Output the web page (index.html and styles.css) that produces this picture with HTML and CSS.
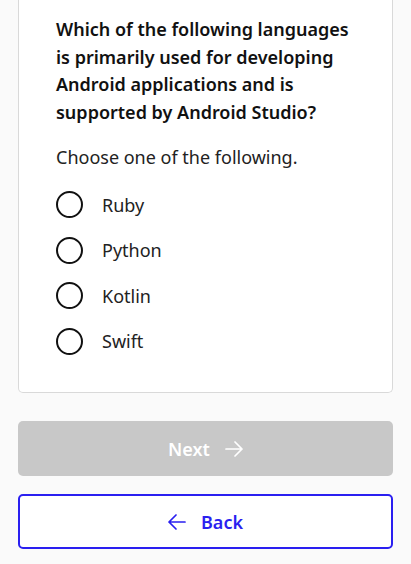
FILE: index.html
```html
<!DOCTYPE html>
<html lang="en">
<head>
<meta charset="utf-8">
<title>Question</title>
<link rel="stylesheet" href="styles.css">
</head>
<body>
<main class="page">
  <section class="card">
    <h2 class="question">Which of the following languages is primarily used for developing Android applications and is supported by Android Studio?</h2>
    <p class="hint">Choose one of the following.</p>
    <ul class="options">
      <li class="option"><span class="radio"></span><span class="label">Ruby</span></li>
      <li class="option"><span class="radio"></span><span class="label">Python</span></li>
      <li class="option"><span class="radio"></span><span class="label">Kotlin</span></li>
      <li class="option"><span class="radio"></span><span class="label">Swift</span></li>
    </ul>
  </section>
  <div class="actions">
    <button class="btn btn-next" type="button">Next
      <svg class="arrow" width="18" height="16" viewBox="0 0 18 16" fill="none" stroke="currentColor" stroke-width="1.7" stroke-linecap="round" stroke-linejoin="round"><path d="M1 8h16M10 1l7 7-7 7"/></svg>
    </button>
    <button class="btn btn-back" type="button">
      <svg class="arrow" width="18" height="16" viewBox="0 0 18 16" fill="none" stroke="currentColor" stroke-width="1.7" stroke-linecap="round" stroke-linejoin="round"><path d="M17 8H1M8 1L1 8l7 7"/></svg>
      Back
    </button>
  </div>
</main>
</body>
</html>
```

FILE: styles.css
```css
html, body {
  margin: 0;
  padding: 0;
  background: #fafafa;
  font-family: "Noto Sans", "Open Sans", sans-serif;
  color: #111;
}

.page {
  padding: 0 18px 15px;
}

.card {
  background: #fff;
  border: 1px solid #d9d9d9;
  border-top: 0;
  border-radius: 0 0 5px 5px;
  padding: 16px 37px 28px;
}

.question {
  margin: 0;
  font-size: 18px;
  font-weight: 600;
  line-height: 27.5px;
  color: #111;
}

.hint {
  margin: 18px 0 0;
  font-size: 18px;
  font-weight: 400;
  line-height: 27.5px;
  color: #222;
}

.options {
  list-style: none;
  margin: 10.5px 0 0;
  padding: 0;
}

.option {
  display: flex;
  align-items: center;
  height: 45.5px;
  gap: 19px;
}

.radio {
  box-sizing: border-box;
  width: 27px;
  height: 27px;
  border: 2px solid #111;
  border-radius: 50%;
  flex: none;
}

.label {
  font-size: 18px;
  color: #222;
}

.actions {
  display: flex;
  flex-direction: column;
  gap: 18px;
  margin-top: 28px;
}

.btn {
  display: flex;
  align-items: center;
  justify-content: center;
  gap: 15px;
  height: 55px;
  border-radius: 5px;
  font-family: "Noto Sans", "Open Sans", sans-serif;
  font-size: 18px;
  font-weight: 600;
  padding: 0;
  cursor: pointer;
}

.btn-next {
  background: #c8c8c8;
  border: 0;
  color: #fff;
}

.btn-back {
  background: #fff;
  border: 2px solid #2a1ff0;
  color: #2a1ff0;
}

.arrow {
  display: block;
  flex: none;
}
```
